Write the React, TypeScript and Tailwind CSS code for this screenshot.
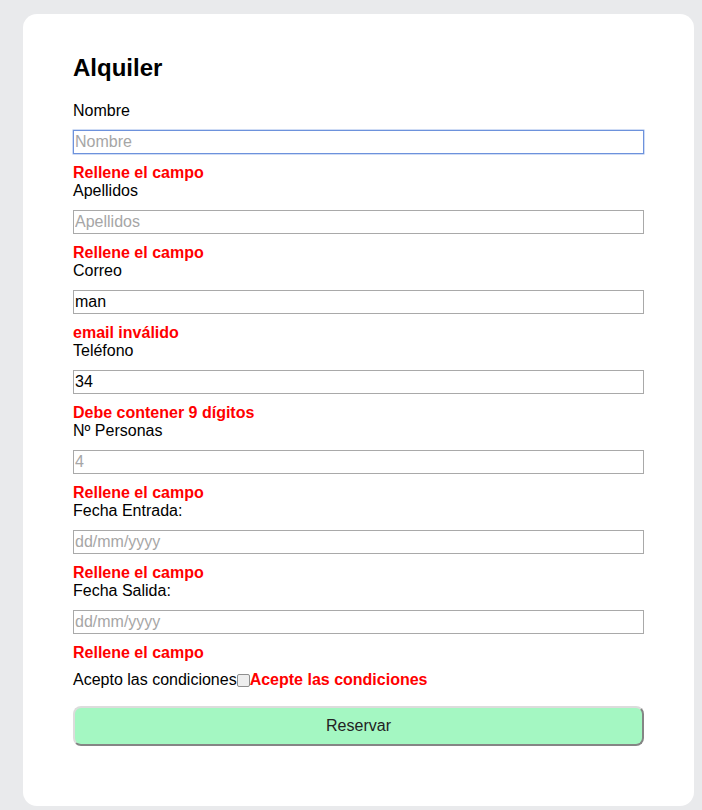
import React from "react";

interface FieldProps {
  label: string;
  placeholder?: string;
  value?: string;
  error: string;
  focused?: boolean;
}

const Field: React.FC<FieldProps> = ({ label, placeholder, value, error, focused }) => (
  <div className="flex flex-col">
    <label className="leading-[18px] text-[16px] text-black">{label}</label>
    <input
      type="text"
      readOnly
      placeholder={placeholder}
      defaultValue={value}
      className={`mt-[10px] h-[24px] w-full px-[1px] text-[16px] leading-[20px] text-black placeholder:text-[#a6a6a6] outline-none border ${
        focused ? "border-[#6d92dc] shadow-[0_0_0_0.5px_#9fb8ea]" : "border-[#a9a9a9]"
      }`}
    />
    <span className="mt-[9px] pt-[1px] leading-[18px] text-[16px] font-bold text-[#ff0000]">{error}</span>
  </div>
);

function App() {
  const fields: FieldProps[] = [
    { label: "Nombre", placeholder: "Nombre", error: "Rellene el campo", focused: true },
    { label: "Apellidos", placeholder: "Apellidos", error: "Rellene el campo" },
    { label: "Correo", value: "man", error: "email inválido" },
    { label: "Teléfono", value: "34", error: "Debe contener 9 dígitos" },
    { label: "Nº Personas", placeholder: "4", error: "Rellene el campo" },
    { label: "Fecha Entrada:", placeholder: "dd/mm/yyyy", error: "Rellene el campo" },
    { label: "Fecha Salida:", placeholder: "dd/mm/yyyy", error: "Rellene el campo" },
  ];

  return (
    <div className="min-h-[810px] bg-[#e9eaec] pt-[14px] font-['Liberation_Sans',Arial,sans-serif]">
      <div className="ml-[23px] w-[671px] h-[792px] bg-white rounded-[14px] pt-[40px] px-[50px] pb-[60px]">
        <h2 className="text-[24px] leading-[28px] font-bold text-black">Alquiler</h2>
        <form className="mt-[20px] flex flex-col">
          {fields.map((f, i) => (
            <Field key={i} {...f} />
          ))}
          <div className="mt-[9px] flex items-center h-[18px] text-[16px] leading-[18px]">
            <span className="text-black">Acepto las condiciones</span>
            <span className="w-[13px] h-[13px] border border-[#8f8f8f] rounded-[2px] bg-[#eeeeee]" />
            <span className="font-bold text-[#ff0000]">Acepte las condiciones</span>
          </div>
          <button
            type="button"
            className="mt-[17px] h-[40px] w-full rounded-[8px] bg-[#a4f7c2] text-[16px] text-[#222] border-2 border-t-[#dcdcdc] border-l-[#dcdcdc] border-r-[#858585] border-b-[#858585]"
          >
            Reservar
          </button>
        </form>
      </div>
    </div>
  );
}

export default App;
